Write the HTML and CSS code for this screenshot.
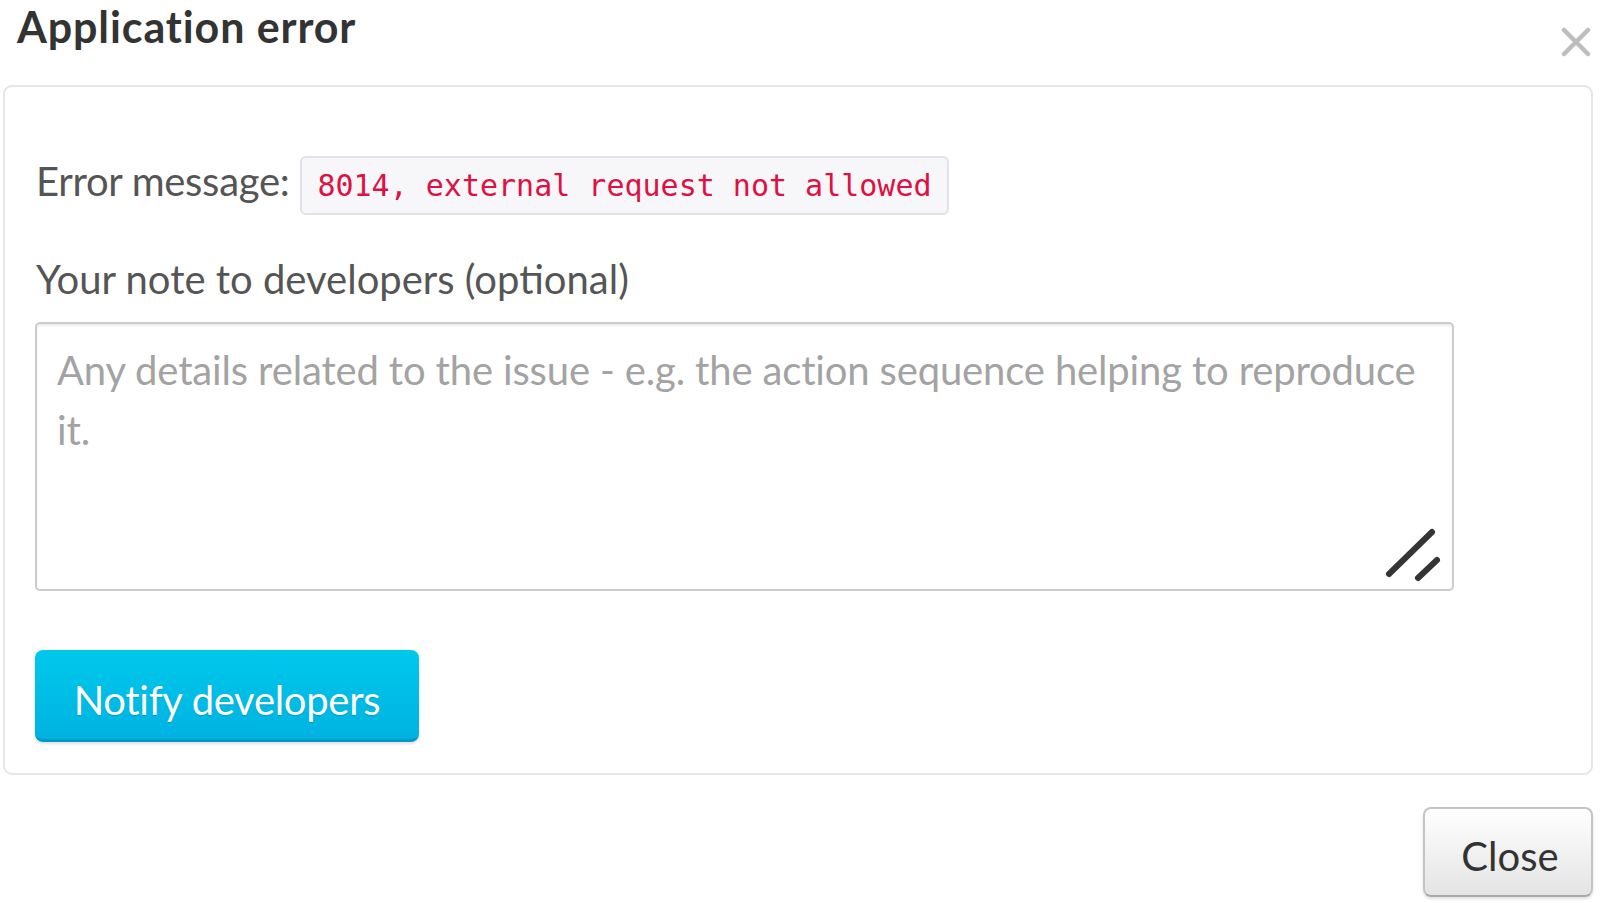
FILE: index.html
```html
<!DOCTYPE html>
<html lang="en">
<head>
<meta charset="utf-8">
<title>Application error</title>
<link rel="stylesheet" href="styles.css">
</head>
<body>
<div class="modal">
  <div class="modal-header">
    <h3 class="modal-title">Application error</h3>
    <button class="dismiss" type="button" aria-label="Close">
      <svg width="30" height="30" viewBox="0 0 30 30"><path d="M3 3 L27 27 M27 3 L3 27" stroke="#bdbdbd" stroke-width="4.5" stroke-linecap="round" fill="none"/></svg>
    </button>
  </div>
  <div class="panel">
    <div class="error-row">
      <span class="error-label">Error message:</span>
      <code class="error-code">8014, external request not allowed</code>
    </div>
    <label class="note-label" for="note">Your note to developers (optional)</label>
    <div class="note-wrap">
      <textarea id="note" class="note" placeholder="Any details related to the issue - e.g. the action sequence helping to reproduce it."></textarea>
      <svg class="grip" width="70" height="70" viewBox="0 0 70 70"><path d="M5 53 L48 11 M34 57 L53 39" stroke="#353535" stroke-width="6" stroke-linecap="round" fill="none"/></svg>
    </div>
    <button class="notify" type="button">Notify developers</button>
  </div>
  <div class="modal-footer">
    <button class="close-btn" type="button">Close</button>
  </div>
</div>
</body>
</html>
```
FILE: styles.css
```css
html, body {
  margin: 0;
  padding: 0;
  background: #ffffff;
}

body {
  font-family: Lato, "Open Sans", "Liberation Sans", sans-serif;
  color: #555555;
  width: 1605px;
  height: 903px;
  overflow: hidden;
}

.modal {
  display: flex;
  flex-direction: column;
}

.modal-header {
  height: 85px;
  display: flex;
  justify-content: space-between;
  align-items: flex-start;
}

.modal-title {
  margin: 0;
  padding: 2px 0 0 17px;
  font-size: 43px;
  line-height: 50px;
  font-weight: 700;
  letter-spacing: 0.9px;
  color: #333333;
}

.dismiss {
  margin: 27px 14px 0 0;
  padding: 0;
  border: 0;
  background: transparent;
  width: 30px;
  height: 30px;
  display: flex;
}

.panel {
  margin-left: 3px;
  width: 1590px;
  height: 690px;
  box-sizing: border-box;
  border: 2px solid #e6e6e6;
  border-radius: 9px;
  padding: 69px 30px 0 30px;
  display: flex;
  flex-direction: column;
  align-items: flex-start;
}

.error-row {
  display: flex;
  align-items: baseline;
}

.error-label {
  font-size: 40px;
  line-height: 48px;
  letter-spacing: -0.3px;
  color: #555555;
  padding-left: 1px;
}

.error-code {
  margin-left: 11px;
  font-family: "DejaVu Sans Mono", "Liberation Mono", monospace;
  font-size: 30px;
  line-height: 35px;
  padding: 10px 15px;
  color: #dd1144;
  background: #f7f7f9;
  border: 2px solid #e2e2e8;
  border-radius: 6px;
  white-space: nowrap;
}

.note-label {
  margin-top: 40px;
  font-size: 40px;
  line-height: 48px;
  color: #555555;
  padding-left: 1px;
}

.note-wrap {
  position: relative;
  margin-top: 19px;
  width: 1419px;
  height: 269px;
}

.note {
  display: block;
  box-sizing: border-box;
  width: 100%;
  height: 100%;
  margin: 0;
  padding: 16px 20px;
  border: 2px solid #cccccc;
  border-radius: 5px;
  box-shadow: inset 0 2px 2px rgba(0, 0, 0, 0.08);
  font-family: Lato, "Open Sans", "Liberation Sans", sans-serif;
  font-size: 40px;
  line-height: 60px;
  letter-spacing: -0.15px;
  color: #555555;
  resize: none;
  outline: none;
  background: #ffffff;
}

.note::placeholder {
  color: #a3a3a3;
}

.grip {
  position: absolute;
  right: 0;
  bottom: 0;
  pointer-events: none;
}

.notify {
  margin-top: 59px;
  width: 384px;
  height: 92px;
  padding: 10px 0 0 0;
  border: 0;
  border-bottom: 3px solid #0099c4;
  border-radius: 8px;
  background: linear-gradient(to bottom, #00c9eb, #00b2e2);
  color: #ffffff;
  font-family: Lato, "Open Sans", "Liberation Sans", sans-serif;
  font-size: 40px;
  line-height: 48px;
  letter-spacing: -0.3px;
  text-shadow: 0 1px 1px rgba(0, 0, 0, 0.15);
  box-shadow: 0 2px 3px rgba(0, 0, 0, 0.12);
}

.modal-footer {
  display: flex;
  justify-content: flex-end;
  padding: 32px 12px 0 0;
}

.close-btn {
  width: 170px;
  height: 90px;
  padding: 8px 0 0 4px;
  border: 2px solid #c4c4c4;
  border-bottom-color: #a9a9a9;
  border-radius: 8px;
  background: linear-gradient(to bottom, #ffffff, #e4e4e4);
  color: #333333;
  font-family: Lato, "Open Sans", "Liberation Sans", sans-serif;
  font-size: 40px;
  line-height: 48px;
  box-shadow: 0 2px 3px rgba(0, 0, 0, 0.12);
}
```
